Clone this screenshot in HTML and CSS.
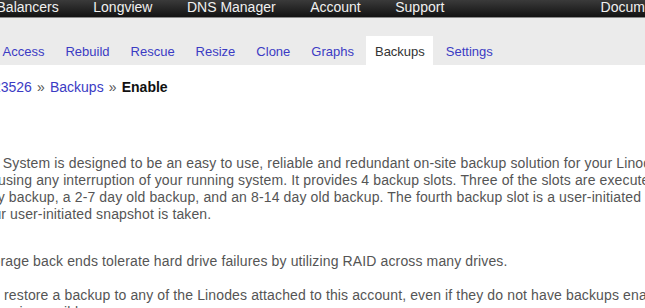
FILE: index.html
```html
<!DOCTYPE html>
<html lang="en">
<head>
<meta charset="utf-8">
<title>Linode Manager - Backups</title>
<link rel="stylesheet" href="styles.css">
</head>
<body>
<div class="page">
  <nav class="topnav">
    <ul class="nav-main">
      <li><a href="#">Linodes</a></li>
      <li><a href="#">NodeBalancers</a></li>
      <li><a href="#">Longview</a></li>
      <li><a href="#">DNS Manager</a></li>
      <li><a href="#">Account</a></li>
      <li><a href="#">Support</a></li>
    </ul>
    <ul class="nav-right">
      <li><a href="#">Documentation</a></li>
      <li><a href="#">Community</a></li>
    </ul>
  </nav>

  <div class="tabbar">
    <ul class="tabs">
      <li><a href="#">Dashboard</a></li>
      <li><a href="#">Remote Access</a></li>
      <li><a href="#">Rebuild</a></li>
      <li><a href="#">Rescue</a></li>
      <li><a href="#">Resize</a></li>
      <li><a href="#">Clone</a></li>
      <li><a href="#">Graphs</a></li>
      <li class="active"><a href="#">Backups</a></li>
      <li><a href="#">Settings</a></li>
    </ul>
  </div>

  <main class="content">
    <div class="crumbs">
      <a href="#">Linodes</a> » <a href="#">linode-123526</a> » <a href="#">Backups</a> » <strong>Enable</strong>
    </div>

    <p class="intro">
      <span class="line">The Linode Backup System is designed to be an easy to use, reliable and redundant on-site backup solution for your Linodes.</span>
      <span class="line">It's done without causing any interruption of your running system. It provides 4 backup slots. Three of the slots are executed and rotated</span>
      <span class="line">automatically a daily backup, a 2-7 day old backup, and an 8-14 day old backup. The fourth backup slot is a user-initiated snapshot, which is</span>
      <span class="line">refreshed when your user-initiated snapshot is taken.</span>
    </p>

    <p>
      <span class="line">Linode Backups storage back ends tolerate hard drive failures by utilizing RAID across many drives.</span>
    </p>

    <p>
      <span class="line">In addition, you can restore a backup to any of the Linodes attached to this account, even if they do not have backups enabled.</span>
      <span class="line">A full or partial restore is possible.</span>
    </p>
  </main>
</div>
</body>
</html>
```

FILE: styles.css
```css
html, body {
  overflow: hidden;
}

body {
  margin: 0;
  background: #ffffff;
  font-family: "Liberation Sans", Arial, sans-serif;
  font-size: 13px;
  color: #555555;
}

a {
  text-decoration: none;
}

ul {
  list-style: none;
  margin: 0;
  padding: 0;
}

.page {
  width: 970px;
  margin-left: -150px;
}

/* top navigation */
.topnav {
  display: flex;
  height: 17px;
  padding-left: 29.5px;
  padding-right: 20px;
  background: linear-gradient(#3a3a3a, #121212);
  border-bottom: 1px solid #8a8a8a;
  font-size: 14px;
}

.nav-main,
.nav-right {
  display: flex;
  gap: 34.5px;
}

.nav-right {
  margin-left: auto;
}

.topnav a {
  display: block;
  line-height: 15px;
  color: #f0f0f0;
}

/* tabs */
.tabbar {
  background: #ebebeb;
  padding: 18px 0 0 11px;
}

.tabs {
  display: flex;
  gap: 4px;
}

.tabs a {
  display: block;
  padding: 8px 8.5px 6px;
  line-height: 15px;
  color: #3b3bc4;
}

.tabs .active a {
  background: #ffffff;
  color: #333333;
}

/* content */
.content {
  padding-left: 26px;
  font-size: 14px;
}

.crumbs {
  margin-top: 14px;
  line-height: 16px;
  color: #555555;
  word-spacing: 1.25px;
}

.crumbs a {
  color: #3b3bc4;
}

.crumbs strong {
  color: #111111;
}

.content p {
  margin: 0 0 17px;
  line-height: 17px;
  letter-spacing: 0.13px;
}

.content p.intro {
  margin-top: 60px;
  margin-bottom: 30px;
}

.line {
  display: block;
  white-space: nowrap;
}
```
